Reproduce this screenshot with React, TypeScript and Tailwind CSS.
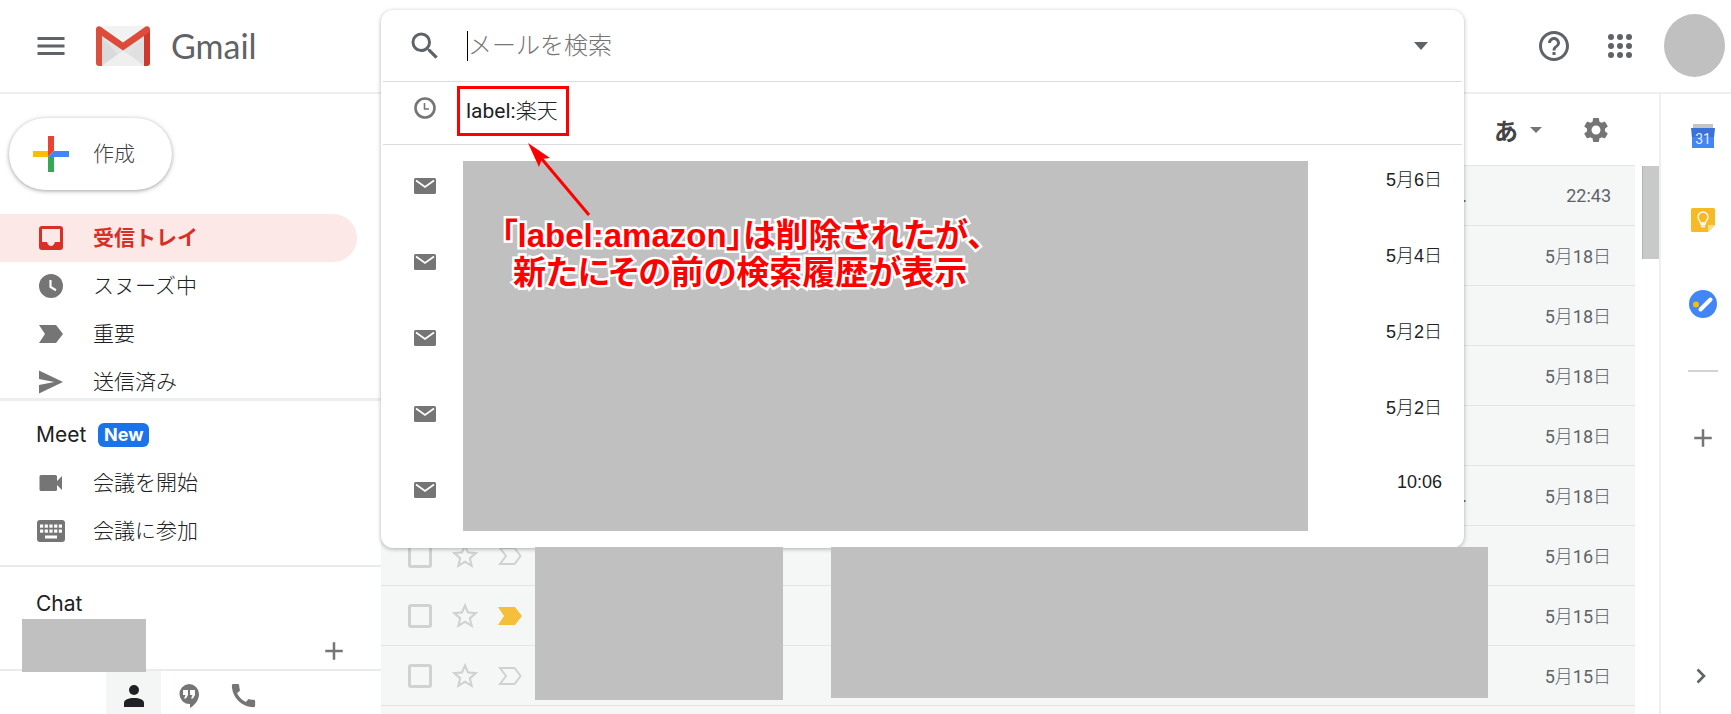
import React, { useState } from 'react';
import { MdMenu, MdSearch, MdHelpOutline, MdSettings, MdStarBorder, MdAdd, MdCall } from 'react-icons/md';

const mails = [
  { id: 1, date: '22:43', snippet: '...', important: false },
  { id: 2, date: '5月18日', snippet: '', important: false },
  { id: 3, date: '5月18日', snippet: '', important: false },
  { id: 4, date: '5月18日', snippet: '', important: false },
  { id: 5, date: '5月18日', snippet: '', important: false },
  { id: 6, date: '5月18日', snippet: '...', important: false },
  { id: 7, date: '5月16日', snippet: '', important: false },
  { id: 8, date: '5月15日', snippet: '', important: true },
  { id: 9, date: '5月15日', snippet: '', important: false },
  { id: 10, date: '', snippet: '', important: false },
];

const suggestionDates = ['5月6日', '5月4日', '5月2日', '5月2日', '10:06'];

const folders = [
  { label: '受信トレイ', icon: <InboxIcon />, active: true },
  { label: 'スヌーズ中', icon: <SnoozeIcon />, active: false },
  { label: '重要', icon: <ImportantIcon />, active: false },
  { label: '送信済み', icon: <SentIcon />, active: false },
];

function InboxIcon() {
  return (
    <svg viewBox="0 0 24 24" className="w-6 h-6" fill="currentColor">
      <path fillRule="evenodd" d="M3 0h18a3 3 0 0 1 3 3v18a3 3 0 0 1-3 3H3a3 3 0 0 1-3-3V3a3 3 0 0 1 3-3zm0 3v13h5c.6 2.300 2 4 4 4s3.400-1.700 4-4h5V3z" />
    </svg>
  );
}

function SnoozeIcon() {
  return (
    <svg viewBox="0 0 24 24" className="w-6 h-6">
      <circle cx="12" cy="12" r="12" fill="currentColor" />
      <path d="M11.500 6v7l5.500 3.300" fill="none" stroke="#fff" strokeWidth="2.200" />
    </svg>
  );
}

function ImportantIcon() {
  return (
    <svg viewBox="0 0 24 24" className="w-6 h-6" fill="currentColor">
      <path d="M0 3h17l7 9-7 9H0l6-9z" />
    </svg>
  );
}

function SentIcon() {
  return (
    <svg viewBox="0 0 25 24" className="w-6 h-6" fill="currentColor">
      <path d="M0 0l25 12L0 24v-9l16-3L0 9z" />
    </svg>
  );
}

function VideoIcon() {
  return (
    <svg viewBox="0 0 24 24" className="w-6 h-6" fill="currentColor">
      <path d="M2 4h14.500a1.500 1.500 0 0 1 1.500 1.500V10l5-5v14l-5-5v4.500a1.500 1.500 0 0 1-1.500 1.500H2a1.500 1.500 0 0 1-1.500-1.500v-13A1.500 1.500 0 0 1 2 4z" />
    </svg>
  );
}

function KeyboardIcon() {
  return (
    <svg viewBox="0 0 28 24" className="w-7 h-6 -mx-0.5 shrink-0">
      <rect x="0" y="1" width="28" height="22" rx="3" fill="currentColor" />
      <g fill="#fff">
        {[3, 7.700, 12.400, 17.100, 21.800].map(x => (
          <React.Fragment key={x}>
            <rect x={x} y="5.500" width="3.200" height="3.200" />
            <rect x={x} y="10.500" width="3.200" height="3.200" />
          </React.Fragment>
        ))}
        <rect x="8" y="16.500" width="12" height="3" />
      </g>
    </svg>
  );
}

function EnvelopeIcon() {
  return (
    <svg viewBox="0 0 22 16" className="w-[22px] h-4">
      <rect width="22" height="16" rx="1.500" fill="#757575" />
      <path d="M2 2.500l9 6.500 9-6.500" fill="none" stroke="#fff" strokeWidth="1.800" />
    </svg>
  );
}

function GmailLogo() {
  return (
    <svg viewBox="0 0 54 40" className="w-[54px] h-10">
      <rect x="2" width="50" height="40" rx="2" fill="#e3e3e3" />
      <path d="M4 0h46L27 19z" fill="#f1f2f2" />
      <path d="M6 40l16-12 5-3 5 3 16 12z" fill="#efefef" />
      <path d="M6 12l16 16L6 39z" fill="#dadada" />
      <path d="M48 12L33 27l15 13z" fill="#e0e0e0" />
      <path d="M0 3v34a3 3 0 0 0 3 3h3V8z" fill="#d9503f" />
      <path d="M54 3v34a3 3 0 0 1-3 3h-3V8z" fill="#d2372c" />
      <path d="M0 3.500C0 .800 2.600-.600 5 1l22 15.500L49 1c2.400-1.600 5-.200 5 2.500 0 1.700-.600 2.800-2 3.800L27 24.500 2 7.300C.600 6.300 0 5.200 0 3.500z" fill="#dd4b3b" />
    </svg>
  );
}

// Digits keep the regular weight, 月 and 日 are set lighter
function DateText({ value }: { value: string }) {
  return (
    <>
      {value.split(/([月日])/).map((part, idx) =>
        /[月日]/.test(part) ? <span key={idx} className="font-['Noto_Sans_CJK_JP',sans-serif] font-light">{part}</span> : part
      )}
    </>
  );
}

function Header() {
  return (
    <header className="relative z-10 flex h-[94px] shrink-0 items-center border-b-2 border-[#efefef]">
      <div className="flex w-[381px] shrink-0 items-center pl-[33px]">
        <button aria-label="メインメニュー" className="text-[#5f6368]">
          <MdMenu className="w-9 h-9" />
        </button>
        <a href="#inbox" className="ml-[27px] flex items-center gap-[21px]">
          <GmailLogo />
          <span className="font-['Lato',sans-serif] text-[34px] leading-10 text-[#5f6368]">Gmail</span>
        </a>
      </div>
      <div className="relative flex-1 self-stretch">
        <SearchPanel />
      </div>
      <div className="flex w-[267px] shrink-0 items-center pl-[72px] text-[#5f6368]">
        <button aria-label="サポート">
          <MdHelpOutline className="w-9 h-9" />
        </button>
        <button aria-label="Google アプリ" className="ml-9">
          <svg viewBox="0 0 24 24" className="w-6 h-6" fill="currentColor">
            {[3, 12, 21].map(y => [3, 12, 21].map(x => <circle key={`${x}-${y}`} cx={x} cy={y} r="3" />))}
          </svg>
        </button>
        <button aria-label="アカウント" className="mb-0.5 ml-8 h-[63px] w-[61px] rounded-[50%] bg-[#c0c0c0]" />
      </div>
    </header>
  );
}

function SearchPanel() {
  const [query, setQuery] = useState('');

  return (
    <div className="absolute inset-x-0 top-2.5 rounded-xl bg-white shadow-[0_1px_4px_rgba(60,64,67,0.4)]">
      <form className="flex h-[71px] items-center pl-[26px] pr-[31px]" onSubmit={e => e.preventDefault()}>
        <button aria-label="検索" className="text-[#5f6368]">
          <MdSearch className="w-9 h-9" />
        </button>
        <span className="ml-6 h-[30px] w-px bg-black" />
        <input
          type="text"
          aria-label="メールを検索"
          placeholder="メールを検索"
          value={query}
          onChange={e => setQuery(e.target.value)}
          className="h-10 min-w-0 flex-1 bg-transparent pb-1 text-2xl font-light outline-none placeholder:text-[#757575]"
        />
        <button aria-label="検索オプションを表示" className="flex h-6 w-6 items-center justify-center">
          <svg viewBox="0 0 14 8" className="h-2 w-3.5" fill="#5f6368">
            <path d="M0 0h14L7 8z" />
          </svg>
        </button>
      </form>

      <div className="mx-0.5 border-y border-[#dadce0]">
        <a href="#search" className="relative flex h-[62px] items-center pl-[31px] text-[21px] text-[#202124]">
          <svg viewBox="0 0 22 22" className="mb-2.5 h-[22px] w-[22px]" fill="none" stroke="#757575">
            <circle cx="11" cy="11" r="9.500" strokeWidth="2.600" />
            <path d="M10.500 6v6h4.500" strokeWidth="1.600" />
          </svg>
          <span className="ml-[30px] pb-1 font-['Roboto',sans-serif]">
            label:<span className="font-['Noto_Sans_CJK_JP',sans-serif] font-light">楽天</span>
          </span>
          {/* highlight */}
          <span className="absolute left-[74px] top-1 h-[50px] w-28 border-[3px] border-[#fe0000]" />
        </a>
      </div>

      <div className="flex pb-[7px] pt-4">
        <ul className="w-[82px] shrink-0">
          {suggestionDates.map((date, idx) => (
            <li key={idx} className="flex h-[76px] items-start pl-[33px] pt-[17px]">
              <EnvelopeIcon />
            </li>
          ))}
        </ul>
        <div className="relative h-[370px] flex-1 bg-[#c0c0c0]">
          <Callout />
        </div>
        <ul className="w-[156px] shrink-0">
          {suggestionDates.map((date, idx) => (
            <li key={idx} className="h-[76px] pr-[22px] pt-[5px] text-right font-['Liberation_Sans',sans-serif] text-lg leading-6 text-[#202124]">
              <DateText value={date} />
            </li>
          ))}
        </ul>
      </div>
    </div>
  );
}

// Arrow and note drawn over the results
function Callout() {
  return (
    <>
      <svg viewBox="0 0 64 76" className="absolute -top-[19px] left-[64px] h-[76px] w-16">
        <path d="M14 16l48 57" stroke="#fe0000" strokeWidth="3" />
        <path d="M1 1l22 15-8 1-3 8z" fill="#fe0000" />
      </svg>
      <div className="absolute left-[38px] top-[56px] whitespace-nowrap font-['Liberation_Sans','Noto_Sans_CJK_JP',sans-serif] text-[33px] font-bold leading-[37px] text-[#fe0000] [font-feature-settings:'palt'] [paint-order:stroke_fill] [-webkit-text-stroke:5px_#fff]">
        <p>「label:amazon」は削除されたが、</p>
        <p className="pl-3">新たにその前の検索履歴が表示</p>
      </div>
    </>
  );
}

function Sidebar() {
  return (
    <aside className="flex w-[381px] shrink-0 flex-col text-[21px] text-[#202124]">
      <div className="shrink-0 py-6 pl-[9px]">
        <button className="flex h-[72px] w-[163px] items-center rounded-full bg-white pl-6 shadow-[0_1px_4px_rgba(60,64,67,0.5)]">
          <svg viewBox="0 0 36 36" className="h-9 w-9">
            <path d="M15 0h6v15l-6 6z" fill="#ea4335" />
            <path d="M0 15h15v6H0z" fill="#fbbc04" />
            <path d="M15 21h6v15h-6z" fill="#34a853" />
            <path d="M21 15h15v6H15z" fill="#4285f4" />
          </svg>
          <span className="ml-6 pb-0.5 font-light text-[#3c4043]">作成</span>
        </button>
      </div>

      <nav className="min-h-0 flex-1 overflow-hidden">
        {folders.map(folder => (
          <a
            key={folder.label}
            href="#folder"
            className={`mr-6 flex h-12 items-center gap-[30px] rounded-r-full pl-[39px] ${
              folder.active ? 'bg-[#fce8e6] font-bold text-[#d93025]' : 'font-light'
            }`}
          >
            <span className={folder.active ? '' : 'text-[#757575]'}>{folder.icon}</span>
            <span className="pb-[3px]">{folder.label}</span>
          </a>
        ))}
      </nav>

      <section className="shrink-0 border-t-[3px] border-[#eceff0] pb-2.5">
        <h2 className="flex h-[58px] items-center gap-3 pl-9 pt-2.5 font-['Inter',sans-serif]">
          Meet
          <span className="flex h-6 w-[51px] items-center justify-center rounded-md bg-[#1a73e8] text-lg font-bold text-white">New</span>
        </h2>
        <a href="#start" className="flex h-12 items-center gap-[30px] pl-[39px] font-light">
          <span className="text-[#757575]"><VideoIcon /></span>
          <span className="pb-[3px]">会議を開始</span>
        </a>
        <a href="#join" className="flex h-12 items-center gap-[30px] pl-[39px] font-light">
          <span className="text-[#757575]"><KeyboardIcon /></span>
          <span className="pb-[3px]">会議に参加</span>
        </a>
      </section>

      <section className="relative flex h-[106px] shrink-0 justify-between border-y-2 border-[#ebebeb] pl-9 pr-8">
        <h2 className="pt-[21px] font-['Inter',sans-serif]">Chat</h2>
        <button aria-label="チャットを開始" className="mb-[3px] self-end text-[#757575]">
          <MdAdd className="w-[30px] h-[30px]" />
        </button>
        <div className="absolute -bottom-[3px] left-[22px] h-[53px] w-[124px] bg-[#c0c0c0]" />
      </section>

      <div className="flex h-[43px] shrink-0 pl-[106px] text-[#757575]">
        <button aria-label="連絡先" className="flex w-[55px] items-center justify-center bg-[#f4f6f6] pt-1.5 text-[#202124]">
          <svg viewBox="0 0 20 22" className="h-[22px] w-5" fill="currentColor">
            <circle cx="10" cy="5" r="5" />
            <path d="M0 22v-4c0-3.500 4.500-5 10-5s10 1.500 10 5v4z" />
          </svg>
        </button>
        <button aria-label="ハングアウト" className="flex w-[55px] items-center justify-center pt-1.5">
          <svg viewBox="0 0 20 24" className="h-6 w-5">
            <path d="M10 0a10 10 0 0 1 10 10c0 6-4 11-9 14v-4A10 10 0 1 1 10 0z" fill="currentColor" />
            <path d="M4 6h5v5l-2 3.500H5L6.500 11H4zM11 6h5v5l-2 3.500h-2l1.500-3.500H11z" fill="#fff" />
          </svg>
        </button>
        <button aria-label="電話" className="flex w-[55px] items-center justify-center pt-1.5">
          <MdCall className="h-[31px] w-[31px]" />
        </button>
      </div>
    </aside>
  );
}

function MailList() {
  return (
    <main className="flex min-w-0 flex-1 flex-col">
      <div className="flex h-[71px] shrink-0 items-center justify-end pr-12">
        <button className="flex items-center gap-3 text-2xl font-bold text-[#444]">
          あ
          <svg viewBox="0 0 12 6" className="h-1.5 w-3" fill="#757575">
            <path d="M0 0h12L6 6z" />
          </svg>
        </button>
        <button aria-label="設定" className="ml-[39px] text-[#757575]">
          <MdSettings className="h-[30px] w-[30px]" />
        </button>
      </div>

      <div className="flex min-h-0 flex-1">
        <div className="relative min-w-0 flex-1 overflow-hidden bg-[#f4f7f6]">
          <ul>
            {mails.map(mail => (
              <li key={mail.id} className="flex h-[60px] items-center border-t border-[#e2e5e5] pl-[27px] pr-6 font-['Roboto',sans-serif] text-lg text-[#5f6368]">
                <input type="checkbox" aria-label="選択" className="h-6 w-6 appearance-none rounded-[3px] border-[3px] border-[#d0d2d2]" />
                <button aria-label="スター" className="ml-[17px] text-[#d0d2d2]">
                  <MdStarBorder className="h-8 w-8" />
                </button>
                <svg viewBox="0 0 24 18" className="ml-[17px] h-[18px] w-6">
                  {mail.important ? (
                    <path d="M0 0h17l7 9-7 9H0l6-9z" fill="#f6bf3a" />
                  ) : (
                    <path d="M2 1h14.500l6 8-6 8H2l6-8z" fill="none" stroke="#d0d2d2" strokeWidth="2" />
                  )}
                </svg>
                <span className="flex-1 text-right">{mail.snippet}</span>
                <time className="w-36 text-right">
                  <DateText value={mail.date} />
                </time>
              </li>
            ))}
          </ul>
        </div>
        <div className="w-6 shrink-0 pl-[7px] pt-px">
          <div className="h-[93px] border-l border-[#b4b4b4] bg-[#c8c9c9]" />
        </div>
      </div>
    </main>
  );
}

function SidePanel() {
  return (
    <aside className="flex w-[72px] shrink-0 flex-col items-center border-l-2 border-[#efefef] pl-3.5 pt-7 text-[#757575]">
      <button aria-label="カレンダー" className="flex h-7 items-center">
        <svg viewBox="0 0 24 24" className="h-6 w-6">
          <path d="M2 0h20v6H2z" fill="#c4c4c4" />
          <path d="M0 4h24l-1 10H1z" fill="#3b72d9" />
          <path d="M1 13h22v11H1z" fill="#4285f4" />
          <text x="12" y="19.500" textAnchor="middle" fontSize="14" fill="#e8effc" fontFamily="Roboto">31</text>
        </svg>
      </button>
      <button aria-label="Keep" className="mt-14 flex h-7 items-center">
        <svg viewBox="0 0 24 24" className="h-6 w-6">
          <path d="M1.500 0h21A1.500 1.500 0 0 1 24 1.500V17l-7 7H1.500A1.500 1.500 0 0 1 0 22.500v-21A1.500 1.500 0 0 1 1.500 0z" fill="#f5ba24" />
          <path d="M24 17l-7 7v-7z" fill="#fadb91" />
          <path d="M9.500 15c0-2-2.500-3-2.500-6a5 5 0 0 1 10 0c0 3-2.500 4-2.500 6z" fill="none" stroke="#fff" strokeWidth="1.300" />
          <path d="M9.500 16.500h5M10 18.500h4" stroke="#fff" strokeWidth="1.600" />
        </svg>
      </button>
      <button aria-label="ToDo リスト" className="mt-14 flex h-7 items-center">
        <svg viewBox="0 0 28 28" className="h-7 w-7">
          <circle cx="14" cy="14" r="14" fill="#4285f4" />
          <circle cx="7" cy="14.500" r="3" fill="#fbbc04" />
          <path d="M11.500 19.500L21.500 9.500" stroke="#fff" strokeWidth="4" strokeLinecap="round" />
        </svg>
      </button>
      <hr className="mt-[52px] w-[30px] border-t-2 border-[#d3d3d3]" />
      <button aria-label="アドオンを取得" className="mt-[51px]">
        <MdAdd className="h-[30px] w-[30px]" />
      </button>
      <button aria-label="サイドパネルを非表示" className="mb-[30px] mt-auto mr-1">
        <svg viewBox="0 0 10 16" className="h-4 w-2.5" fill="none" stroke="#5f6368" strokeWidth="2.600">
          <path d="M1.500 1.500L8 8l-6.500 6.500" />
        </svg>
      </button>
    </aside>
  );
}

export default function App() {
  return (
    <div className="relative flex h-screen flex-col overflow-hidden bg-white font-['Noto_Sans_CJK_JP',sans-serif]">
      <Header />
      <div className="flex min-h-0 flex-1">
        <Sidebar />
        <MailList />
        <SidePanel />
      </div>
      {/* masked sender and subject columns */}
      <div className="absolute bottom-3.5 left-[535px] z-20 h-[153px] w-[248px] bg-[#c0c0c0]" />
      <div className="absolute bottom-4 left-[831px] right-[243px] z-20 h-[151px] bg-[#c0c0c0]" />
    </div>
  );
}
